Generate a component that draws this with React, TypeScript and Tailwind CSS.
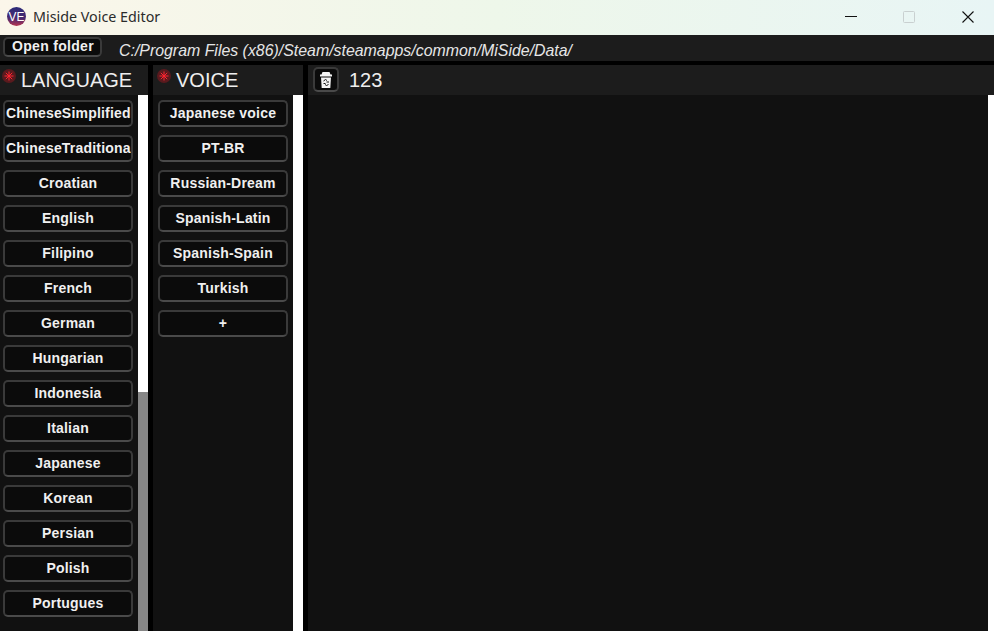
const languages = [
  "ChineseSimplified",
  "ChineseTraditional",
  "Croatian",
  "English",
  "Filipino",
  "French",
  "German",
  "Hungarian",
  "Indonesia",
  "Italian",
  "Japanese",
  "Korean",
  "Persian",
  "Polish",
  "Portugues",
];

const voices = ["Japanese voice", "PT-BR", "Russian-Dream", "Spanish-Latin", "Spanish-Spain", "Turkish", "+"];

const ListButton = ({label}: {label: string}) => (
  <button className="block h-[27px] w-[130px] shrink-0 overflow-hidden whitespace-nowrap rounded-[5px] border-2 border-[#3a3a3a] border-b-[#4a4a4a] bg-[#0b0b0b] px-[1px] text-center text-[14px] font-bold leading-[21px] tracking-[0.2px] text-[#f0f0f0]">
    {label}
  </button>
);

const Dot = () => (
  <svg width="14" height="14" viewBox="0 0 14 14" className="mt-[-8px] shrink-0">
    <circle cx="7" cy="7" r="7" fill="#5a1a1e" />
    <g stroke="#ff2430" strokeWidth="1">
      <path d="M7 2.500v9M2.500 7h9M3.800 3.800l6.400 6.400M10.200 3.800l-6.400 6.400" />
    </g>
  </svg>
);

const PanelHeader = ({title, className}: {title: string; className: string}) => (
  <div className={`flex h-[30px] shrink-0 items-center bg-[#1c1c1c] ${className}`}>
    <Dot />
    <span className="ml-[5px] text-[20px] text-[#eeeeee]">{title}</span>
  </div>
);

export default function App() {
  return (
    <div className="flex h-[631px] w-[994px] flex-col overflow-hidden bg-black font-['Liberation_Sans',sans-serif]">
      <div className="flex h-[35px] shrink-0 items-center bg-gradient-to-r from-[#fbf6ea] via-[#eef7ea] to-[#e8f5f5] pb-[2px]">
        <svg width="19" height="19" viewBox="0 0 20 20" className="ml-[7px]">
          <defs>
            <linearGradient id="logo" x1="0" y1="0" x2="0" y2="1">
              <stop offset="0" stopColor="#2b2a78" />
              <stop offset="0.6" stopColor="#4b2a70" />
              <stop offset="1" stopColor="#b8344f" />
            </linearGradient>
          </defs>
          <circle cx="10" cy="10" r="10" fill="url(#logo)" />
          <text x="10" y="14.500" textAnchor="middle" fontSize="12.500" fill="#ffffff" fontFamily="Liberation Sans, sans-serif">
            VE
          </text>
        </svg>
        <span className="ml-[7px] font-['Noto_Sans',sans-serif] text-[14.300px] text-[#2b2b2b]">Miside Voice Editor</span>
        <div className="ml-auto flex items-center">
          <svg width="12" height="12" viewBox="0 0 12 12" className="mr-[46px]">
            <path d="M0 5.500h12" stroke="#111111" strokeWidth="1" />
          </svg>
          <svg width="12" height="12" viewBox="0 0 12 12" className="mr-[47px]">
            <rect x=".5" y=".5" width="11" height="11" rx="1" fill="none" stroke="#c9d0d0" strokeWidth="1" />
          </svg>
          <svg width="12" height="12" viewBox="0 0 12 12" className="mr-[20px]">
            <path d="M.5.500l11 11M11.500.500l-11 11" stroke="#111111" strokeWidth="1.100" />
          </svg>
        </div>
      </div>

      <div className="flex h-[26px] shrink-0 items-start bg-[#1c1c1c] pl-[3px] pt-[2px]">
        <button className="h-[20px] w-[99px] rounded-[5px] border-2 border-[#3a3a3a] border-b-[#4a4a4a] bg-[#0b0b0b] pb-[2px] pl-[1px] text-[14px] font-bold leading-[14px] tracking-[0.3px] text-[#f0f0f0]">
          Open folder
        </button>
        <span className="ml-[17px] mt-[4px] text-[15.900px] italic leading-[20px] text-[#e6e6e6]">C:/Program Files (x86)/Steam/steamapps/common/MiSide/Data/</span>
      </div>

      <div className="mt-[4px] flex min-h-0 flex-1 gap-[5px]">
        <div className="flex w-[148px] shrink-0 flex-col">
          <PanelHeader title="LANGUAGE" className="pl-[2px]" />
          <div className="flex min-h-0 flex-1">
            <div className="flex w-[138px] flex-col gap-[8px] overflow-hidden bg-[#111111] pl-[3px] pt-[5px]">
              {languages.map((l) => (
                <ListButton key={l} label={l} />
              ))}
            </div>
            <div className="flex w-[10px] flex-col bg-[#868686]">
              <div className="h-[297px] bg-white" />
            </div>
          </div>
        </div>

        <div className="flex w-[150px] shrink-0 flex-col">
          <PanelHeader title="VOICE" className="pl-[4px]" />
          <div className="flex min-h-0 flex-1">
            <div className="flex w-[140px] flex-col gap-[8px] bg-[#111111] pl-[5px] pt-[5px]">
              {voices.map((v) => (
                <ListButton key={v} label={v} />
              ))}
            </div>
            <div className="w-[10px] bg-white" />
          </div>
        </div>

        <div className="flex min-w-0 flex-1 flex-col">
          <div className="flex h-[30px] shrink-0 items-start bg-[#1c1c1c] pl-[5px] pt-[2px]">
            <button className="flex h-[25px] w-[26px] items-center justify-center rounded-[5px] border-2 border-[#3a3a3a] border-b-[#4a4a4a] bg-[#0b0b0b]">
              <svg width="12" height="16" viewBox="0 0 12 16">
                <path d="M2.500 0h7l1 2.500H12v2H0v-2h1.500z" fill="#f5f5f5" />
                <path d="M1 5.500h10l-.7 10.500H1.700z" fill="#f5f5f5" />
                <path d="M3.500 9l2-1.500 1.500 1M8.500 12.500l-2 1-1.500-1M3.500 11.500h2M6.500 10h2.500" stroke="#111111" strokeWidth="1" fill="none" />
              </svg>
            </button>
            <span className="ml-[10px] mt-[1px] text-[20px] leading-[24px] text-[#eeeeee]">123</span>
          </div>
          <div className="flex min-h-0 flex-1">
            <div className="flex-1 bg-[#111111]" />
            <div className="w-[6px] bg-white" />
          </div>
        </div>
      </div>
    </div>
  );
}
